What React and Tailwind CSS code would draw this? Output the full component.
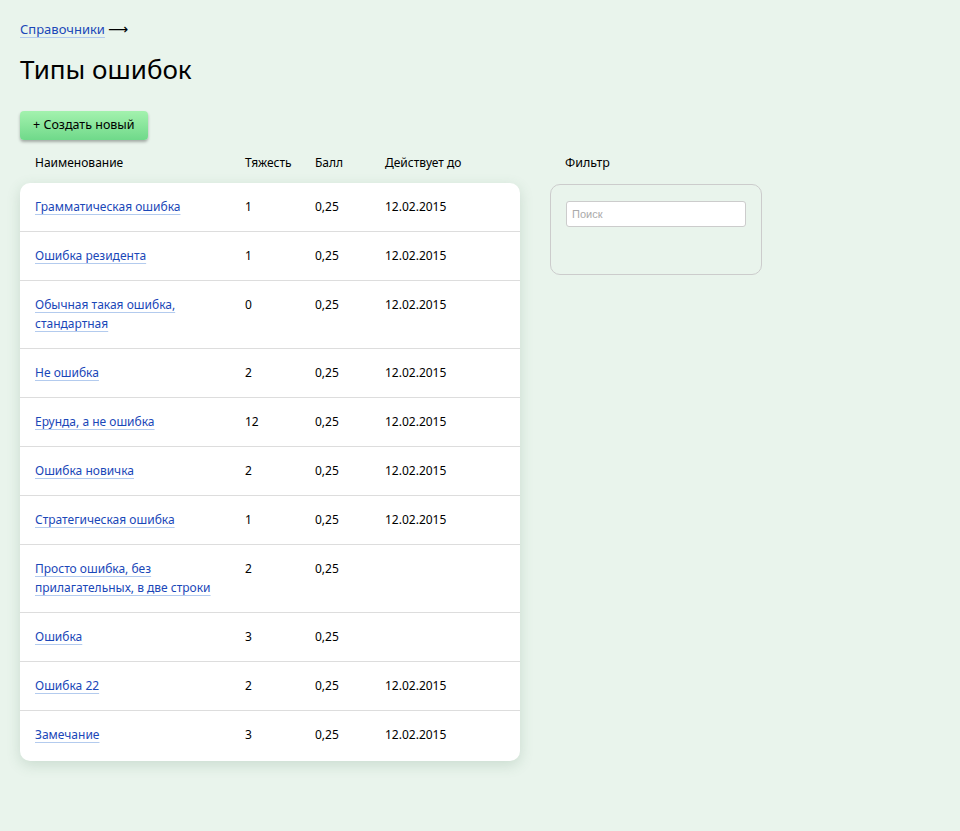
import React from "react";

const rows = [
  ["Грамматическая ошибка", "1", "0,25", "12.02.2015"],
  ["Ошибка резидента", "1", "0,25", "12.02.2015"],
  ["Обычная такая ошибка,\nстандартная", "0", "0,25", "12.02.2015"],
  ["Не ошибка", "2", "0,25", "12.02.2015"],
  ["Ерунда, а не ошибка", "12", "0,25", "12.02.2015"],
  ["Ошибка новичка", "2", "0,25", "12.02.2015"],
  ["Стратегическая ошибка", "1", "0,25", "12.02.2015"],
  ["Просто ошибка, без\nприлагательных, в две строки", "2", "0,25", ""],
  ["Ошибка", "3", "0,25", ""],
  ["Ошибка 22", "2", "0,25", "12.02.2015"],
  ["Замечание", "3", "0,25", "12.02.2015"],
];

function Link({ children }) {
  return (
    <a
      href="#"
      className="text-[#1a47b8] underline decoration-[#b3cbee] decoration-1 underline-offset-[3px]"
    >
      {children}
    </a>
  );
}

export default function App() {
  return (
    <div
      className="min-h-[831px] bg-[#e9f4ec] text-black px-5 pt-[20px]"
      style={{ fontFamily: '"Noto Sans", "Liberation Sans", sans-serif' }}
    >
      <div className="text-[13px] leading-[19px] flex items-center">
        <Link>Справочники</Link>
        <span className="ml-[3px] text-[14px]" style={{ fontFamily: '"DejaVu Sans", sans-serif' }}>⟶</span>
      </div>
      <h1 className="text-[26px] leading-[36px] mt-[12px] font-normal">Типы ошибок</h1>
      <button className="mt-[24px] h-[29px] px-[13px] rounded-[4px] text-[12.5px] bg-gradient-to-b from-[#a3f2ae] to-[#6fd98a] shadow-[0_2px_3px_rgba(0,0,0,0.3)]">
        + Создать новый
      </button>
      <div className="flex gap-[30px] mt-[14px]">
        <div className="w-[500px]">
          <div className="flex text-[12px] leading-[18px] px-[15px] pb-[11px]">
            <div className="w-[210px]">Наименование</div>
            <div className="w-[70px]">Тяжесть</div>
            <div className="w-[70px]">Балл</div>
            <div>Действует до</div>
          </div>
          <div className="bg-white rounded-[10px] pb-[2px] shadow-[0_4px_14px_rgba(60,110,80,0.18)]">
            {rows.map((r, i) => (
              <div
                key={i}
                className={`flex text-[12px] leading-[19px] px-[15px] pt-[14px] pb-[15px] ${i > 0 ? "border-t border-[#dddddd]" : ""}`}
              >
                <div className="w-[210px] pr-4">
                  {r[0].split("\n").map((l, j) => (
                    <div key={j}>
                      <Link>{l}</Link>
                    </div>
                  ))}
                </div>
                <div className="w-[70px]">{r[1]}</div>
                <div className="w-[70px]">{r[2]}</div>
                <div>{r[3]}</div>
              </div>
            ))}
          </div>
        </div>
        <div className="w-[212px]">
          <div className="text-[12.5px] leading-[18px] px-[15px] pb-[11px]">Фильтр</div>
          <div className="mt-[1px] h-[91px] rounded-[10px] border border-[#cccccc] px-[15px] pt-[15px]">
            <input
              placeholder="Поиск"
              className="w-full h-[26px] bg-white border border-[#cccccc] rounded-[3px] px-[5px] text-[11px] placeholder:text-[#aaaaaa] outline-none"
              style={{ fontFamily: '"Liberation Sans", sans-serif' }}
            />
          </div>
        </div>
      </div>
    </div>
  );
}
